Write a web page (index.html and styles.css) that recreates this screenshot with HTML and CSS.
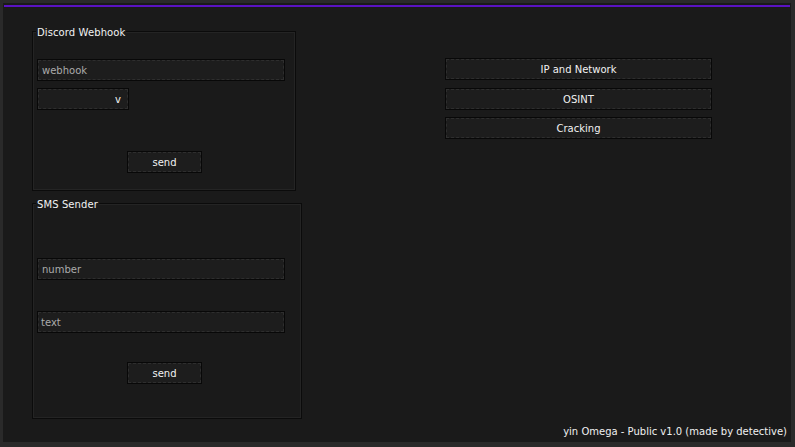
FILE: index.html
```html
<!DOCTYPE html>
<html>
<head>
<meta charset="utf-8">
<link rel="stylesheet" href="styles.css">
</head>
<body>
<div class="window">
  <div class="bar"></div>
  <div class="main">
    <div class="left">
      <div class="group g1">
        <span class="title">Discord Webhook</span>
        <div class="field f-webhook">webhook</div>
        <div class="select">v</div>
        <div class="btn send s1">send</div>
      </div>
      <div class="group g2">
        <span class="title">SMS Sender</span>
        <div class="field f-number">number</div>
        <div class="field f-text">text</div>
        <div class="btn send s2">send</div>
      </div>
    </div>
    <div class="right">
      <div class="btn wide">IP and Network</div>
      <div class="btn wide w2">OSINT</div>
      <div class="btn wide w3">Cracking</div>
    </div>
  </div>
  <div class="footer">yin Omega - Public v1.0 (made by detective)</div>
</div>
</body>
</html>
```

FILE: styles.css
```css
html, body {
  margin: 0;
  padding: 0;
}
body {
  background: #2a2a2a;
  width: 795px;
  height: 447px;
  overflow: hidden;
  font-family: "DejaVu Sans", "Liberation Sans", sans-serif;
  font-size: 10px;
  color: #ececec;
}
.window {
  margin: 3px 0 0 3px;
  width: 788px;
  height: 439px;
  background: #1a1a1a;
  box-sizing: border-box;
  padding: 2px 0 0 1px;
  display: flex;
  flex-direction: column;
}
.bar {
  height: 2px;
  background: #5a12c2;
  margin-right: 1px;
}
.main {
  display: flex;
  flex-direction: row;
  align-items: flex-start;
  padding: 24px 0 0 28px;
}
.left {
  display: flex;
  flex-direction: column;
  align-items: flex-start;
  gap: 12px;
}
.group {
  box-sizing: border-box;
  border: 1px solid #0b0b0b;
  box-shadow: inset 1px 1px 0 #242424, inset -1px -1px 0 #242424;
  display: flex;
  flex-direction: column;
  align-items: flex-start;
  padding-left: 4px;
}
.g1 { width: 264px; height: 160px; }
.g2 { width: 270px; height: 216px; }
.title {
  display: block;
  background: #1a1a1a;
  line-height: 12px;
  height: 12px;
  margin: -5px 0 -1px -1px;
  padding: 0 1px;
  color: #f2f2f2;
  letter-spacing: 0.1px;
}
.field, .select, .btn {
  box-sizing: border-box;
  height: 22px;
  line-height: 20px;
  padding-top: 1px;
  border: 1px solid #080808;
  outline: 1px dashed #2e2e2e;
  outline-offset: -2px;
  background: #1d1d1d;
}
.field {
  width: 248px;
  padding-left: 4px;
  color: #ababab;
}
.f-webhook { margin-top: 21px; }
.f-number { margin-top: 48px; }
.f-text { margin-top: 31px; padding-left: 3px; }
.select {
  width: 92px;
  margin-top: 7px;
  text-align: right;
  padding-right: 7px;
  color: #f0f0f0;
}
.btn {
  text-align: center;
  color: #f2f2f2;
}
.send {
  width: 75px;
  margin-left: 90px;
}
.s1 { margin-top: 41px; }
.s2 { margin-top: 29px; }
.right {
  display: flex;
  flex-direction: column;
  margin: 27px 0 0 143px;
}
.wide { width: 267px; }
.w2 { margin-top: 8px; }
.w3 { margin-top: 7px; }
.footer {
  margin-top: auto;
  line-height: 12px;
  padding: 0 4px 4px 0;
  text-align: right;
  color: #f0f0f0;
}
```
